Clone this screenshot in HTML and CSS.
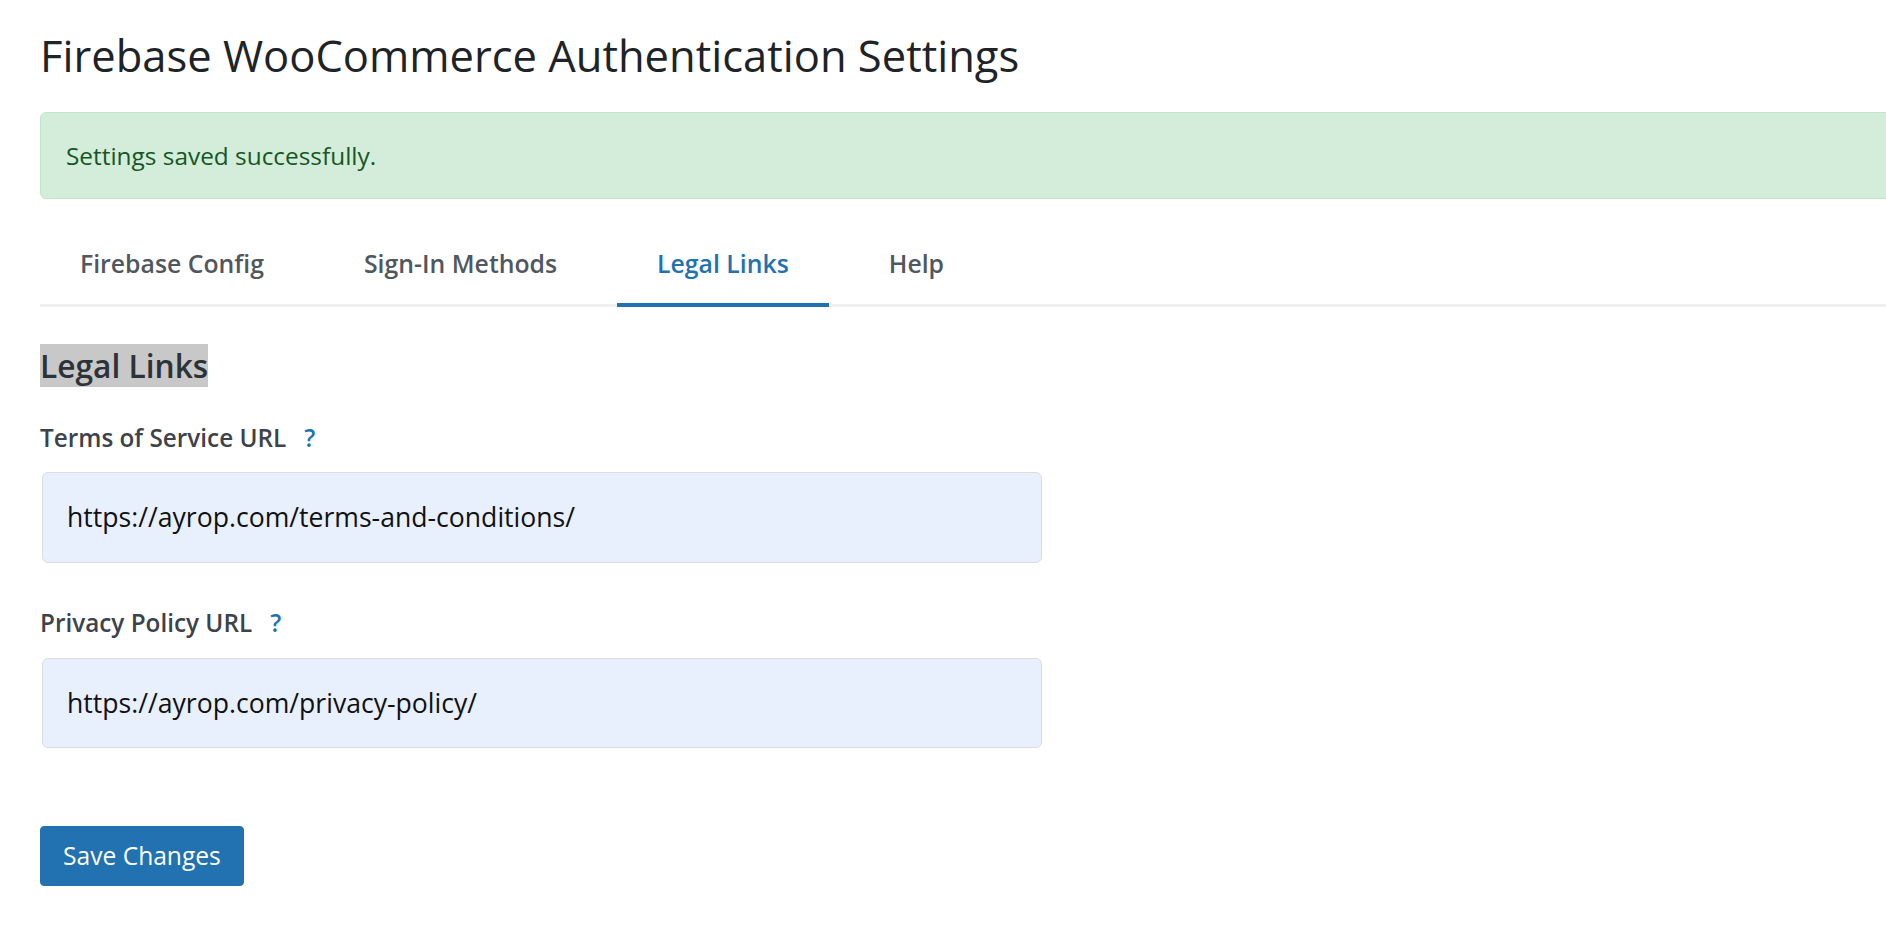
FILE: index.html
```html
<!DOCTYPE html>
<html lang="en">
<head>
<meta charset="utf-8">
<title>Firebase WooCommerce Authentication Settings</title>
<link rel="stylesheet" href="styles.css">
</head>
<body>
<div class="wrap">
  <h1 class="page-title">Firebase WooCommerce Authentication Settings</h1>

  <div class="notice">Settings saved successfully.</div>

  <nav class="tabs">
    <a class="tab" href="#">Firebase Config</a>
    <a class="tab" href="#">Sign-In Methods</a>
    <a class="tab active" href="#">Legal Links</a>
    <a class="tab" href="#">Help</a>
  </nav>

  <form class="panel">
    <h2 class="section-title"><span class="section-title-text">Legal Links</span></h2>

    <div class="field">
      <label class="field-label" for="tos">Terms of Service URL<span class="help">?</span></label>
      <input class="field-input" id="tos" type="text" value="https://ayrop.com/terms-and-conditions/">
    </div>

    <div class="field">
      <label class="field-label" for="pp">Privacy Policy URL<span class="help">?</span></label>
      <input class="field-input" id="pp" type="text" value="https://ayrop.com/privacy-policy/">
    </div>

    <div class="actions">
      <button class="btn-primary" type="button">Save Changes</button>
    </div>
  </form>
</div>
</body>
</html>
```

FILE: styles.css
```css
html, body {
  margin: 0;
  padding: 0;
  background: #ffffff;
  overflow-x: hidden;
}

body {
  font-family: "Open Sans", "Noto Sans", sans-serif;
  color: #1d2327;
}

.wrap {
  padding: 30px 0 0 40px;
  margin-right: -40px;
}

.page-title {
  margin: 0 0 30px;
  font-size: 43.5px;
  line-height: 52px;
  font-weight: 400;
  color: #1d2327;
}

.notice {
  background: #d4edda;
  border: 1px solid #c3e6cb;
  border-radius: 6px;
  color: #155724;
  font-size: 24.4px;
  line-height: 34px;
  padding: 26px 24px 25px 25px;
}

.tabs {
  display: flex;
  gap: 20px;
  margin-top: 20px;
  border-bottom: 3px solid #f0f0f1;
}

.tab {
  display: block;
  padding: 27px 40px 23px;
  margin-bottom: -3px;
  border-bottom: 4px solid transparent;
  font-size: 24.8px;
  line-height: 34px;
  font-weight: 600;
  color: #50575e;
  text-decoration: none;
}

.tab.active {
  color: #2271b1;
  border-bottom-color: #2271b1;
}

.panel {
  margin: 0;
}

.section-title {
  margin: 36.5px 0 0;
  font-size: 31.7px;
  line-height: 43.5px;
  font-weight: 600;
  color: #2c3338;
}

.section-title-text {
  background: #c8c8c8;
}

.field {
  display: flex;
  flex-direction: column;
  align-items: flex-start;
}

.field-label {
  display: block;
  margin-top: 33.5px;
  margin-bottom: 17.5px;
  font-size: 24.3px;
  line-height: 34px;
  font-weight: 600;
  color: #3c434a;
}

.field + .field .field-label {
  margin-top: 43.5px;
}

.help {
  margin-left: 18px;
  color: #2271b1;
  cursor: help;
}

.field-input {
  box-sizing: border-box;
  width: 1000px;
  height: 90.6px;
  margin: 0 0 0 2px;
  padding: 0 24px;
  border: 1px solid #dcdcde;
  border-radius: 6px;
  background: #e8f0fe;
  font-family: "Open Sans", "Noto Sans", sans-serif;
  font-size: 26.6px;
  color: #111111;
  outline: none;
}

.actions {
  margin-top: 78px;
}

.btn-primary {
  box-sizing: border-box;
  height: 60px;
  padding: 0 22px;
  border: 1px solid #2271b1;
  border-radius: 4px;
  background: #2271b1;
  color: #ffffff;
  font-family: "Open Sans", "Noto Sans", sans-serif;
  font-size: 24.6px;
  line-height: 58px;
  font-weight: 400;
  cursor: pointer;
}
```
